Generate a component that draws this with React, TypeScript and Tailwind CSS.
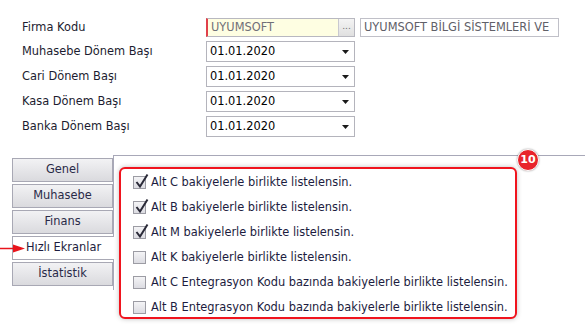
import React from 'react';

const font = { fontFamily: '"DejaVu Sans", Verdana, sans-serif' };

const Caret: React.FC = () => (
  <svg width="7" height="4" viewBox="0 0 7 4" className="mr-[5px]">
    <path d="M0 0 H7 L3.5 4 Z" fill="#1a1a1a" />
  </svg>
);

const CheckBox: React.FC<{ checked: boolean }> = ({ checked }) => (
  <div className="relative w-[13px] h-[13px] border border-[#9c9ca4] bg-gradient-to-b from-[#f4f4f6] to-[#dcdce2] shrink-0">
    {checked && (
      <svg width="16" height="16" viewBox="0 0 16 16" className="absolute left-[0px] top-[-4px]">
        <path d="M2.5 9 L6 13.5 L13.5 1.5" stroke="#2a2a38" strokeWidth="2" fill="none" strokeLinejoin="miter" />
      </svg>
    )}
  </div>
);

const App: React.FC = () => {
  const rows = ['Muhasebe Dönem Başı', 'Cari Dönem Başı', 'Kasa Dönem Başı', 'Banka Dönem Başı'];
  const tabs = ['Genel', 'Muhasebe', 'Finans', 'Hızlı Ekranlar', 'İstatistik'];
  const options = [
    { label: 'Alt C bakiyelerle birlikte listelensin.', checked: true },
    { label: 'Alt B bakiyelerle birlikte listelensin.', checked: true },
    { label: 'Alt M bakiyelerle birlikte listelensin.', checked: true },
    { label: 'Alt K bakiyelerle birlikte listelensin.', checked: false },
    { label: 'Alt C Entegrasyon Kodu bazında bakiyelerle birlikte listelensin.', checked: false },
    { label: 'Alt B Entegrasyon Kodu bazında bakiyelerle birlikte listelensin.', checked: false },
  ];

  return (
    <div className="w-[585px] h-[330px] bg-white overflow-hidden text-[11.4px] text-[#1c1c30] relative" style={font}>
      {/* header form */}
      <div className="flex flex-col gap-[4px] pt-[18px] pl-[22px]">
        <div className="flex items-center h-[19px]">
          <span className="w-[184px] pt-[1px]">Firma Kodu</span>
          <div className="flex h-[19px] w-[149px] border border-[#b8b8c0] border-l-2 border-l-[#e0404a] bg-[#fefee2]">
            <span className="flex-1 pl-[3px] leading-[17px] text-[#707078]">UYUMSOFT</span>
            <div className="w-[16px] border-l border-[#c8c8d0] bg-gradient-to-b from-[#f4f4f4] to-[#e0e0e0] flex items-center justify-center text-[#707070] text-[9px] leading-none pb-[3px]">...</div>
          </div>
          <div className="ml-[5px] h-[19px] w-[199px] border border-[#c0c0c8] pl-[3px] leading-[17px] text-[#606068] overflow-hidden whitespace-nowrap">
            UYUMSOFT BİLGİ SİSTEMLERİ VE
          </div>
        </div>
        {rows.map((r) => (
          <div key={r} className="flex items-center h-[21px]">
            <span className="w-[184px] pt-[1px]">{r}</span>
            <div className="flex items-center justify-between h-[21px] w-[149px] border border-[#b4b4bc] bg-white">
              <span className="pl-[3px] text-black">01.01.2020</span>
              <Caret />
            </div>
          </div>
        ))}
      </div>

      {/* tabs + panel */}
      <div className="flex mt-[18px] pl-[12px]">
        <div className="flex flex-col gap-[2px] w-[101px] pt-[3px]">
          {tabs.map((t, i) =>
            i === 3 ? (
              <div key={t} className="relative z-10 h-[24px] w-[102px] border border-r-0 border-[#a8a8b4] bg-white flex items-center justify-center text-[#1c1c40]">
                {t}
              </div>
            ) : (
              <div key={t} className="h-[24px] border border-[#a8a8b4] bg-gradient-to-b from-[#f2f2f4] to-[#dadade] flex items-center justify-center text-[#2a2a48]">
                {t}
              </div>
            )
          )}
        </div>
        <div className="flex-1 h-[135px] border-t border-l border-[#a8a8b8] pl-[5px] pt-[11px]">
          <div className="w-[398px] h-[152px] border-2 border-[#f0141e] rounded-[6px] shadow-[0_0_5px_rgba(0,0,0,0.25)] bg-white flex flex-col pt-[1px] pl-[12px]">
            {options.map((o) => (
              <div key={o.label} className="flex items-center shrink-0 h-[25px] gap-[5px]">
                <CheckBox checked={o.checked} />
                <span className="whitespace-nowrap text-[#1c1c40]">{o.label}</span>
              </div>
            ))}
          </div>
        </div>
      </div>

      {/* badge */}
      <div className="absolute left-[517px] top-[149px] w-[22px] h-[22px] rounded-full bg-[#e8232b] border-[1.5px] border-white shadow-[0_0_2px_rgba(0,0,0,0.4)] flex items-center justify-center text-white text-[11px] font-bold" style={font}>
        10
      </div>

      {/* arrow */}
      <svg className="absolute z-20 left-0 top-[243px]" width="27" height="11" viewBox="0 0 27 11">
        <line x1="0" y1="5.5" x2="16" y2="5.5" stroke="#e8141c" strokeWidth="1.5" />
        <path d="M13 1.5 L25 5.5 L13 9.5 Z" fill="#e8141c" />
      </svg>
    </div>
  );
};

export default App;
